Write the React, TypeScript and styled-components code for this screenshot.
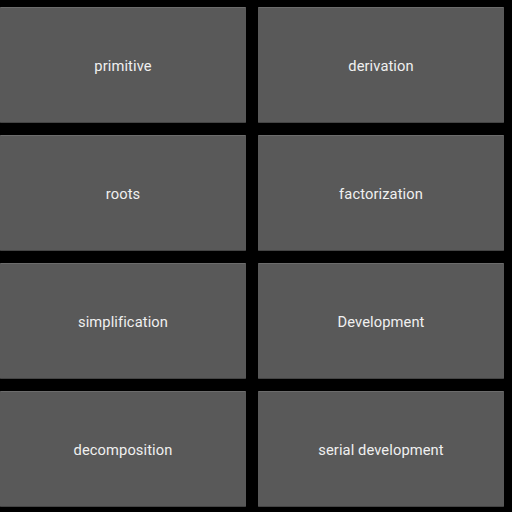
import styled, { createGlobalStyle } from 'styled-components';

const GlobalStyle = createGlobalStyle`
  html, body {
    margin: 0;
    padding: 0;
    background: #000;
  }
  body {
    font-family: Roboto, "Noto Sans", sans-serif;
  }
`

const Grid = styled.main`
  display: grid;
  grid-template-columns: 246px 246px;
  grid-auto-rows: 116px;
  column-gap: 12px;
  row-gap: 12px;
  padding: 7px 8px 5px 0;
  width: 512px;
  height: 512px;
  box-sizing: border-box;
  background: #000;
`

const Tile = styled.button`
  display: flex;
  align-items: center;
  justify-content: center;
  margin: 0;
  padding: 2px 0 0;
  background: #595959;
  border: none;
  border-top: 1px solid #6c6c6c;
  border-bottom: 1px solid #444;
  border-radius: 1px;
  color: #f0f0f0;
  font-family: Roboto, "Noto Sans", sans-serif;
  font-size: 14.7px;
  letter-spacing: 0.1px;
  cursor: pointer;
`

const labels = [
  'primitive', 'derivation',
  'roots', 'factorization',
  'simplification', 'Development',
  'decomposition', 'serial development',
]

const App = () => {
  return (
    <>
      <GlobalStyle />
      <Grid>
        {labels.map(l => <Tile key={l}>{l}</Tile>)}
      </Grid>
    </>
  )
}
export default App;
